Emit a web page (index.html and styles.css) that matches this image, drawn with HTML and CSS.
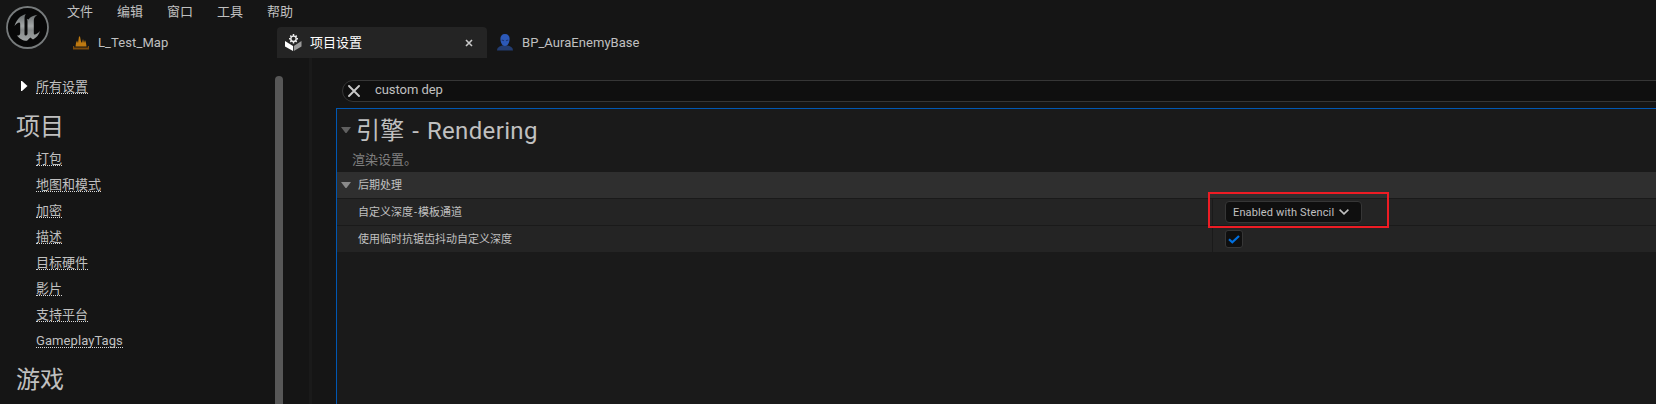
FILE: index.html
```html
<!DOCTYPE html>
<html lang="zh-CN">
<head>
<meta charset="utf-8">
<title>项目设置</title>
<link rel="stylesheet" href="styles.css">
</head>
<body>
<div class="window">
  <header class="top">
    <svg class="logo" width="44" height="44" viewBox="0 0 44 44">
      <defs>
        <linearGradient id="metal" x1="0" y1="0" x2="0" y2="1"><stop offset="0" stop-color="#666b6c"/><stop offset=".45" stop-color="#a4a8a8"/><stop offset=".6" stop-color="#858989"/><stop offset="1" stop-color="#a0a4a4"/></linearGradient>
      </defs>
      <circle cx="22.500" cy="22.500" r="20.500" fill="#080808" stroke="#777b7c" stroke-width="1.800"/>
      <path fill="url(#metal)" d="M21 9C15 10.500 11.500 15 9.500 21C11.500 18.500 13.500 17 14.500 17.500C15.300 18 15.200 19 15.200 20V28C15.200 30 14.200 30.500 12 30.500C14 33.500 18.500 36 22 35.800L25.300 32.500L28 34.500C31 33 34 30 35 26C33 28 31 29.500 29.800 29.500C29 29.500 28.800 29 28.800 28V15.500C28.800 13 30 11.500 32.500 9.800C28 10.500 25 12 23.500 14.500C23 14.200 22.600 14 21.800 14C22.500 15 22.500 16 22.500 17V29C22 30 21.300 30.500 20.500 30.500C19.500 30.500 19.500 29.800 19.500 28.500V13.500C19.500 11.500 20 10 21 9Z"/>
    </svg>
    <div class="bars">
      <nav class="menu"><span>文件</span><span>编辑</span><span>窗口</span><span>工具</span><span>帮助</span></nav>
      <div class="tabs">
        <div class="tab tab-map">
          <svg width="16" height="14" viewBox="0 0 16 14"><path fill="#c07a10" d="M2.500 10.500L3 7L4 4.500L5 7L6 .5H7L8 5.500L9 7L10 3L11 7L12 4L13 7L13.500 10.500Z"/><path fill="#7b4b0d" d="M0 10H1.200V11.500H14.800V10H16V13.500H0Z"/></svg>
          <span>L_Test_Map</span>
        </div>
        <div class="tab tab-active">
          <svg width="17" height="17" viewBox="0 0 17 17"><path fill="#fff" d="M0 7L8 12V17L0 12.500Z"/><path fill="#999" d="M16.500 7L8.800 12V17L16.500 12.500Z"/><circle cx="8.500" cy="4.800" r="2.700" fill="none" stroke="#eee" stroke-width="1.400"/><path stroke="#eee" stroke-width="1.500" d="M8.500 0V2M8.500 7.500V9.500M4 4.800H5.500M11.500 4.800H13M5.300 1.600L6.500 2.800M11.700 1.600L10.500 2.800M5.300 8L6.500 6.800M11.700 8L10.500 6.800"/></svg>
          <span>项目设置</span>
          <svg class="close" width="8" height="8" viewBox="0 0 8 8"><path stroke="#c8c8c8" stroke-width="1.600" d="M1 1L7 7M7 1L1 7"/></svg>
        </div>
        <div class="tab tab-bp">
          <svg width="16" height="17" viewBox="0 0 16 17"><path fill="#233c70" d="M0 16.500C0 13.500 2.500 12.200 5.500 11.500H10.500C13.500 12.200 16 13.500 16 16.500Z"/><path fill="#2c59b8" d="M8 0C4.900 0 3.300 2 3.400 5C3.500 8.500 5 12 8 12C11 12 12.500 8.500 12.600 5C12.700 2 11.100 0 8 0Z"/><path stroke="#1c3670" stroke-width="1.200" d="M4.700 6L7 6.700M11.300 6L9 6.700"/></svg>
          <span>BP_AuraEnemyBase</span>
        </div>
      </div>
    </div>
  </header>
  <main class="content">
    <aside class="sidebar">
      <div class="nav">
        <div class="all"><svg width="7" height="10" viewBox="0 0 7 10"><path fill="#fff" d="M0 0H1L6.500 5L1 10H0Z"/></svg><a class="link">所有设置</a></div>
        <h2>项目</h2>
        <div class="links">
          <a class="link">打包</a><a class="link">地图和模式</a><a class="link">加密</a><a class="link">描述</a><a class="link">目标硬件</a><a class="link">影片</a><a class="link">支持平台</a><a class="link latin">GameplayTags</a>
        </div>
        <h2 class="game">游戏</h2>
      </div>
      <div class="scrollbar"></div>
    </aside>
    <div class="splitter"></div>
    <section class="details">
      <div class="search">
        <svg width="12" height="12" viewBox="0 0 12 12"><path stroke="#c8c8c8" stroke-width="1.900" stroke-linecap="round" d="M1 1L11 11M11 1L1 11"/></svg>
        <span>custom dep</span>
      </div>
      <div class="panel">
        <div class="heading">
          <div class="title"><svg width="10" height="6" viewBox="0 0 10 6"><path fill="#606060" d="M0 0H10L5.500 6H4.500Z"/></svg><h1>引擎 - Rendering</h1></div>
          <p>渲染设置。</p>
        </div>
        <div class="category"><svg width="10" height="6" viewBox="0 0 10 6"><path fill="#8a8a8a" d="M0 0H10L5.500 6H4.500Z"/></svg><span>后期处理</span></div>
        <div class="row"><div class="name">自定义深度<span class="dash">-</span>模板通道</div>
          <div class="value"><div class="combo"><span>Enabled with Stencil</span><svg width="10" height="6" viewBox="0 0 10 6"><path fill="none" stroke="#c0c0c0" stroke-width="1.600" d="M.6 .6L5 4.900L9.400 .6"/></svg></div><div class="marker"></div></div>
        </div>
        <div class="row"><div class="name">使用临时抗锯齿抖动自定义深度</div>
          <div class="value"><div class="check"><svg width="12" height="9" viewBox="0 0 12 9"><path fill="none" stroke="#0070e0" stroke-width="2.200" d="M1 4.300L4.300 7.300L11 1"/></svg></div></div>
        </div>
      </div>
    </section>
  </main>
</div>
</body>
</html>
```
FILE: styles.css
```css
* { box-sizing: border-box; }
body { margin: 0; background: #151515; color: #c0c0c0; font: 13px/16px Roboto, "Noto Sans CJK SC", sans-serif; overflow: hidden; }
svg { display: block; flex: none; }
h1, h2, p { margin: 0; font-weight: 400; }
.window { height: 404px; display: flex; flex-direction: column; }
.top { height: 58px; display: flex; flex: none; }
.logo { margin: 5px 0 0 5px; }
.bars { flex: 1; }
.menu { height: 27px; padding: 4px 0 0 18px; display: flex; gap: 24px; }
.tabs { height: 31px; display: flex; }
.tab { display: flex; align-items: center; letter-spacing: .1px; }
.tab-map { width: 228px; padding-left: 24px; gap: 9px; }
.tab-active { width: 210px; padding: 0 14px 0 8px; gap: 8px; background: #242424; color: #fff; border-radius: 4px 4px 0 0; letter-spacing: 0; }
.close { margin-left: auto; }
.tab-bp { padding-left: 10px; gap: 9px; letter-spacing: .05px; }
.content { flex: 1; display: flex; min-height: 0; }
.sidebar { width: 309px; display: flex; }
.nav { width: 275px; padding-top: 20px; }
.all { display: flex; align-items: center; padding-left: 21px; gap: 8px; }
.link { display: block; height: 16px; line-height: 18px; border-bottom: 1px dotted #d8d8d8; white-space: nowrap; }
.latin { letter-spacing: .08px; }
h2 { font-size: 24px; line-height: 30px; height: 30px; padding: 1px 0 0 16px; margin-top: 17px; }
.links { display: flex; flex-direction: column; align-items: flex-start; gap: 10px; padding: 9px 0 0 36px; }
h2.game { margin-top: 16px; }
.scrollbar { width: 8px; margin-top: 18px; background: #575757; border-radius: 4px 4px 0 0; }
.splitter { width: 3px; background: #1a1a1a; }
.details { flex: 1; min-width: 0; padding: 22px 0 0 24px; display: flex; flex-direction: column; }
.search { height: 22px; flex: none; margin: 0 -12px 6px 6px; padding-left: 5px; border: 1px solid #363636; border-radius: 11px; background: #0f0f0f; display: flex; align-items: center; gap: 15px; }
.search span { margin-top: -2px; letter-spacing: -.05px; }
.panel { flex: 1; border: 1px solid #0057b3; border-width: 1px 0 0 1px; background: #1a1a1a; }
.heading { height: 63px; }
.title { display: flex; align-items: center; height: 43px; padding-left: 4px; gap: 5px; }
.title svg { margin-top: -1px; }
h1 { font-size: 24px; line-height: 30px; letter-spacing: .35px; word-spacing: 1.3px; }
.heading p { padding-left: 15px; color: #808080; }
.category { height: 26px; padding: 0 0 0 4px; display: flex; align-items: center; gap: 7px; background: #2f2f2f; font-size: 11px; }
.category span { padding-top: 1px; }
.row { height: 27px; border-top: 1px solid #1a1a1a; background: #242424; display: flex; font-size: 11px; line-height: 27px; }
.name { width: 875px; padding-left: 21px; }
.dash { padding: 0 1px; }
.value { border-left: 1px solid #1a1a1a; flex: 1; padding-left: 12px; display: flex; align-items: center; position: relative; }
.combo { width: 137px; height: 22px; border: 1px solid #363636; border-radius: 4px; background: #0f0f0f; padding-left: 7px; display: flex; align-items: center; gap: 5px; letter-spacing: .14px; }
.marker { position: absolute; left: -5px; top: -7px; width: 181px; height: 36px; border: 2px solid #ed1c24; z-index: 1; }
.check { width: 18px; height: 18px; border: 1px solid #363636; border-radius: 3px; background: #0f0f0f; display: grid; place-items: center; }
```
